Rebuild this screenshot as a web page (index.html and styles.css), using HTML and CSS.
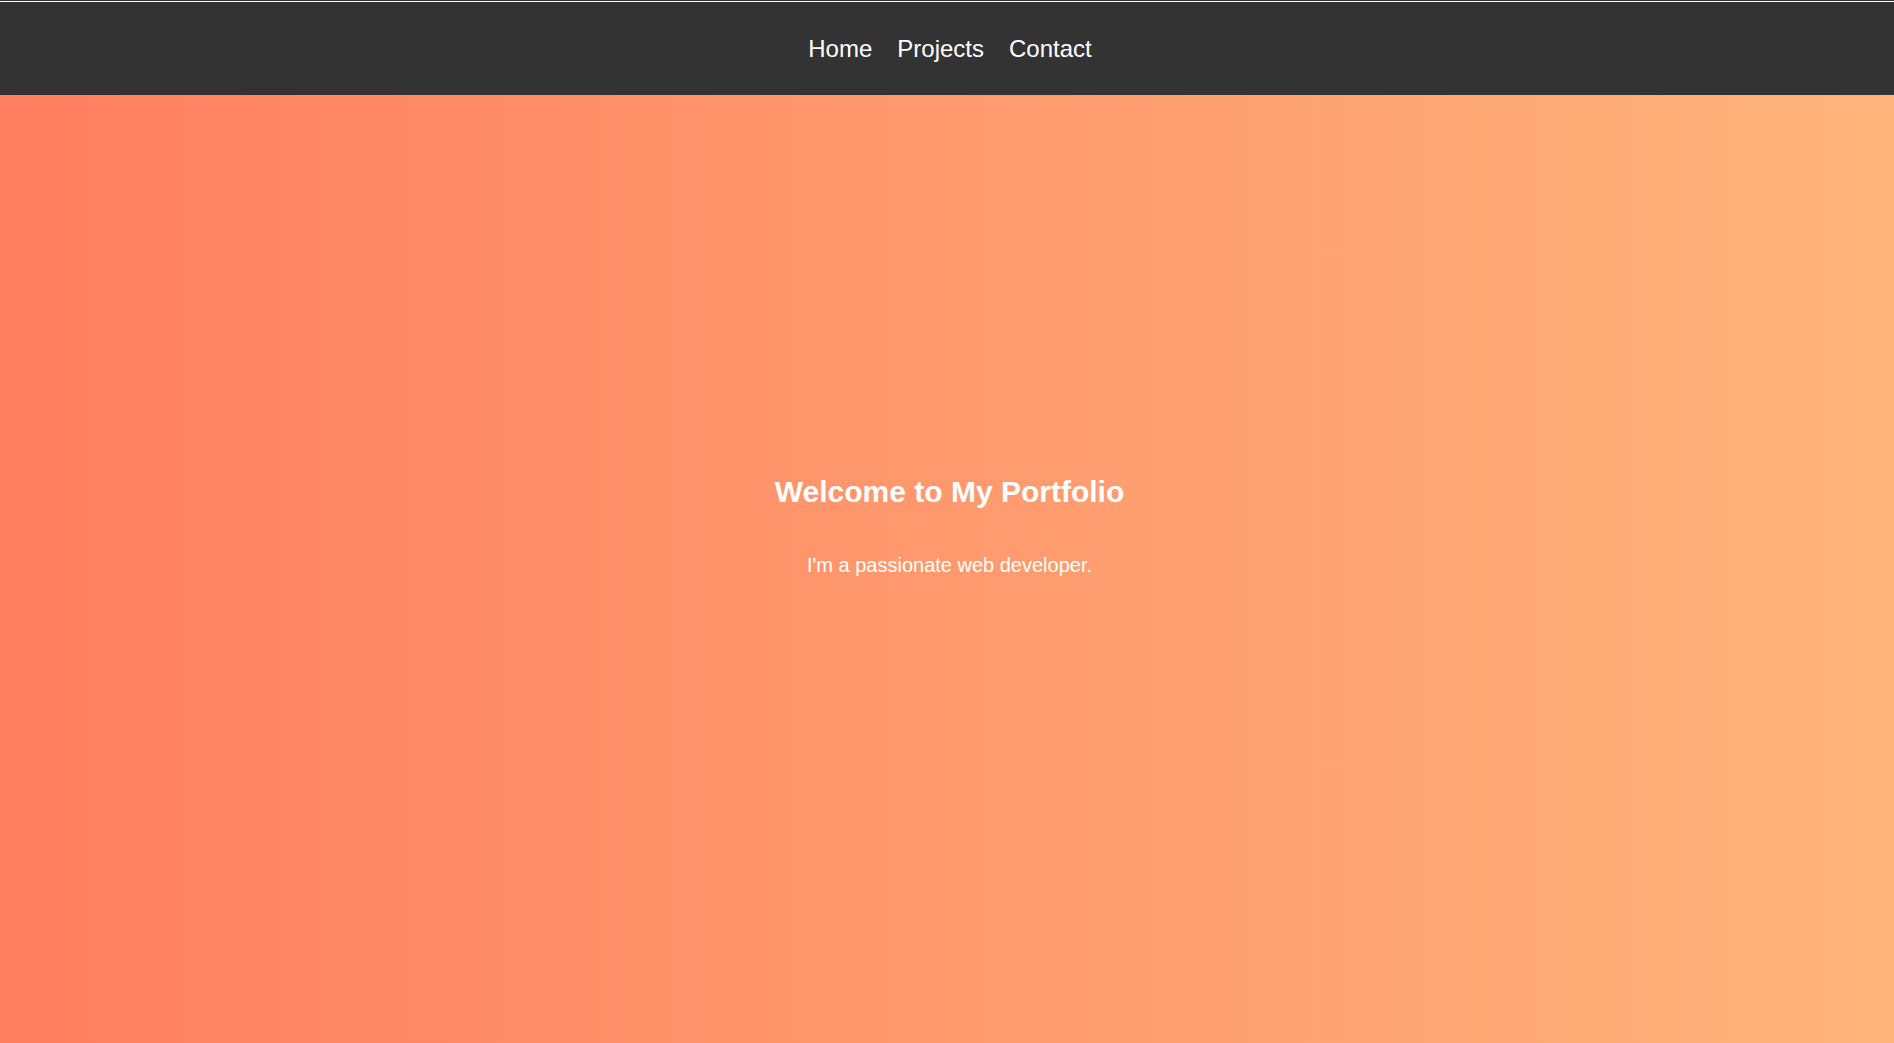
FILE: index.html
```html
<!DOCTYPE html>
<html lang="en">
<head>
<meta charset="utf-8">
<title>My Portfolio</title>
<link rel="stylesheet" href="styles.css">
</head>
<body>
<nav class="topnav">
  <ul class="nav-list">
    <li><a href="#" class="nav-link">Home</a></li>
    <li><a href="#" class="nav-link">Projects</a></li>
    <li><a href="#" class="nav-link">Contact</a></li>
  </ul>
</nav>
<section class="hero">
  <h1 class="hero-title">Welcome to My Portfolio</h1>
  <p class="hero-text">I'm a passionate web developer.</p>
</section>
</body>
</html>
```

FILE: styles.css
```css
html, body {
  margin: 0;
  padding: 0;
}

body {
  font-family: "Liberation Sans", Arial, sans-serif;
  color: #fff;
  overflow: hidden;
}

.topnav {
  height: 95px;
  box-sizing: border-box;
  padding-top: 2px;
  background: #333333;
  box-shadow: inset 0 1px #333333, inset 0 2px #ffffff;
  display: flex;
  align-items: center;
  justify-content: center;
}

.nav-list {
  list-style: none;
  margin: 0;
  padding: 0 0 0 6px;
  display: flex;
  gap: 25px;
}

.nav-link {
  color: #fff;
  text-decoration: none;
  font-size: 24px;
}

.hero {
  min-height: calc(100vh - 95px);
  box-sizing: border-box;
  padding: 0 0 86px 5px;
  background: linear-gradient(to right, #ff7e5f, #feb47b);
  display: flex;
  flex-direction: column;
  align-items: center;
  justify-content: center;
  gap: 45px;
  text-align: center;
}

.hero-title {
  margin: 0;
  font-size: 30px;
  font-weight: bold;
}

.hero-text {
  margin: 0;
  font-size: 20px;
}
```
